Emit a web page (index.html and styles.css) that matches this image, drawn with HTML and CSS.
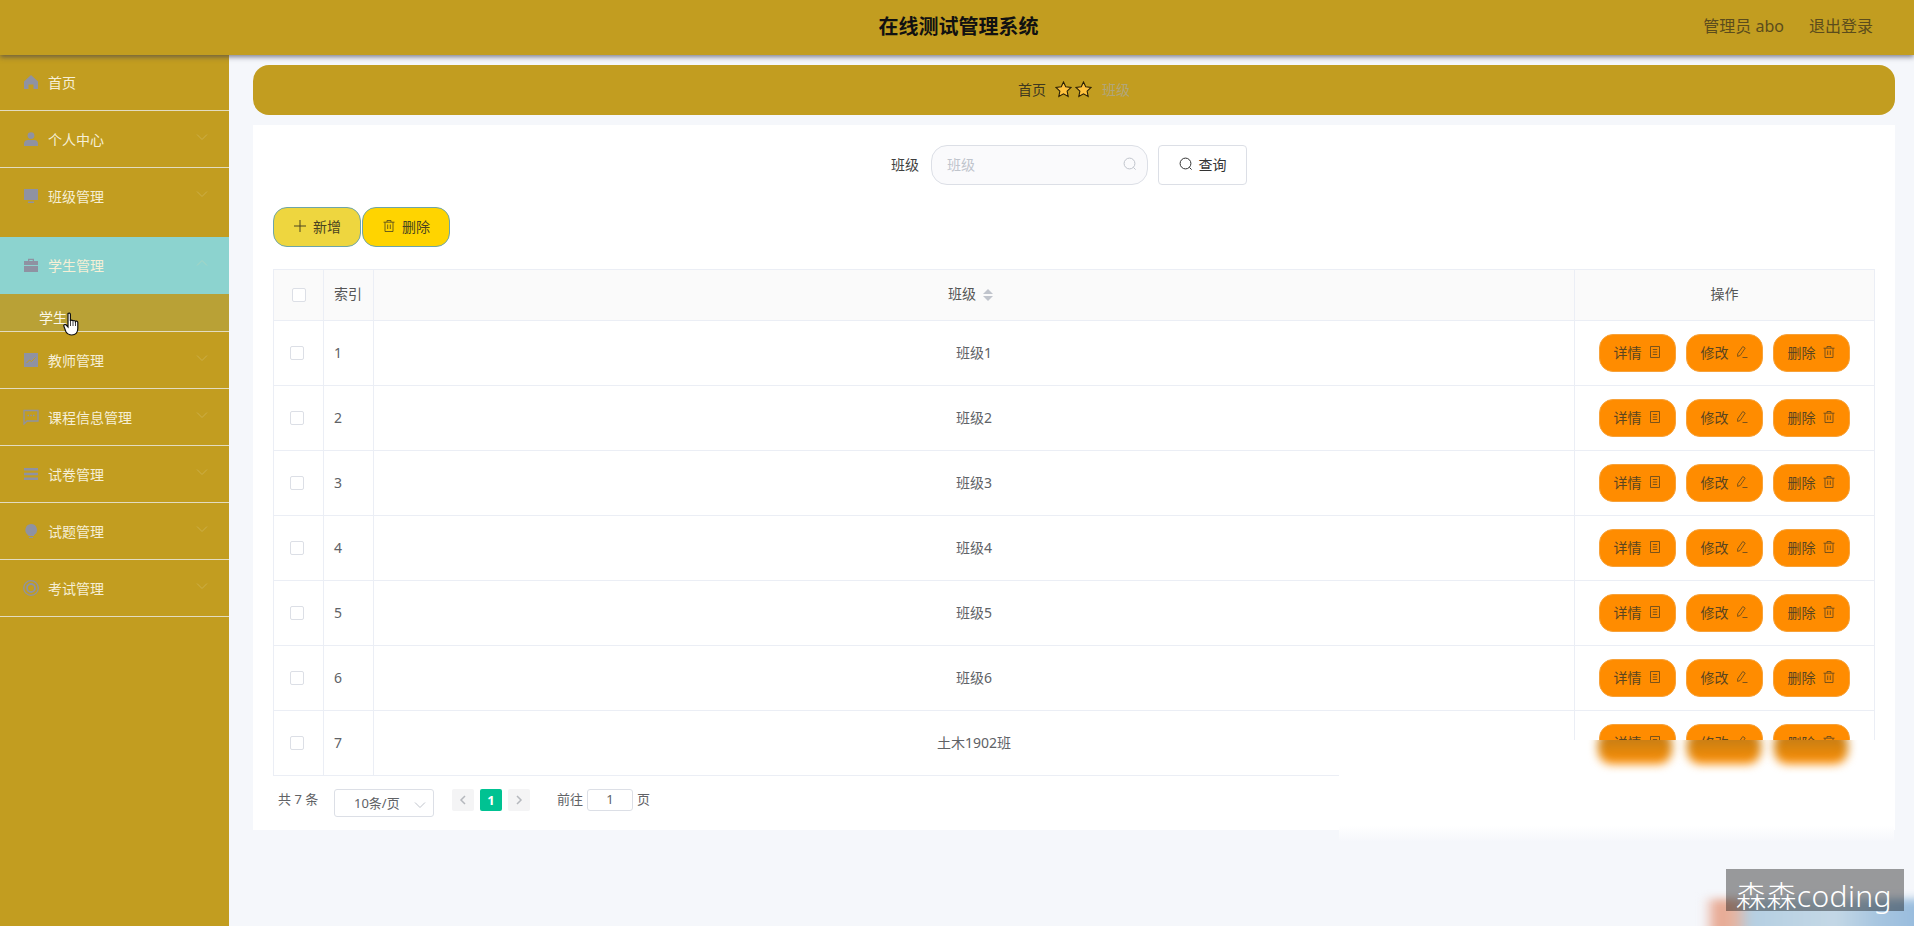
FILE: index.html
```html
<!DOCTYPE html>
<html lang="zh-CN">
<head>
    <meta charset="UTF-8">
    <title>在线测试管理系统</title>
    <link rel="stylesheet" href="styles.css">
</head>
<body>
    <svg class="defs" width="0" height="0">
        <symbol id="i-search" viewBox="0 0 14 14"><circle cx="6.5" cy="6.5" r="5.4" fill="none" stroke="currentColor"/><path d="M10.4 10.4l2.2 2.2" stroke="currentColor" fill="none"/></symbol>
        <symbol id="i-doc" viewBox="0 0 14 14"><path d="M2.5 1.5h9v11h-9zM4.8 4.500h4.400M4.8 7h4.400M4.8 9.500h4.400" fill="none" stroke="currentColor" stroke-width=".8"/></symbol>
        <symbol id="i-edit" viewBox="0 0 14 14"><path d="M7.8 1.500l2.400 1.600-5 7.400-2.600.9.100-2.600zM7.500 12.500h5" fill="none" stroke="currentColor" stroke-width=".8"/></symbol>
        <symbol id="i-trash" viewBox="0 0 14 14"><path d="M1.500 3.200h11M3 3.200v9.300h8V3.200M5 3V1.500h4V3M5.700 5.500v4.500M8.300 5.500v4.500" fill="none" stroke="currentColor" stroke-width=".8"/></symbol>
        <symbol id="i-down" viewBox="0 0 12 12"><path d="M1 3.500l5 5 5-5" fill="none" stroke="currentColor"/></symbol>
        <symbol id="i-star" viewBox="0 0 16 16"><path d="M8 .9l2.100 4.600 5 .6-3.700 3.400 1 5L8 12l-4.400 2.500 1-5L.9 6.100l5-.6z" fill="#ffc23e" stroke="#2a2006" stroke-width="1"/></symbol>
    </svg>

    <header class="topbar">
        <h1 class="title">在线测试管理系统</h1>
        <div class="user-links">
            <span>管理员 abo</span>
            <span>退出登录</span>
        </div>
    </header>

    <div class="layout">
        <aside class="sidebar">
            <div class="menu-item">
                <svg class="menu-icon" viewBox="0 0 14 14"><path d="M7 0L0 6.500V14h4.500V9.500h5V14H14V6.500z"/></svg>
                <span>首页</span>
            </div>
            <div class="menu-item">
                <svg class="menu-icon" viewBox="0 0 14 14"><circle cx="7" cy="3.600" r="3.400"/><path d="M0 14v-2.500C0 9 2 8 4 8h6c2 0 4 1 4 3.500V14z"/></svg>
                <span>个人中心</span>
                <svg class="chevron"><use href="#i-down"/></svg>
            </div>
            <div class="menu-item gap-after">
                <svg class="menu-icon" viewBox="0 0 14 14"><path d="M0 0h14v11H0zM4 12.500h6V14H4z"/></svg>
                <span>班级管理</span>
                <svg class="chevron"><use href="#i-down"/></svg>
            </div>
            <div class="menu-item active">
                <svg class="menu-icon" viewBox="0 0 14 14"><path d="M4 3V.8h6V3h4v4H0V3zM5.300 3h3.400V2H5.300zM0 8h14v6H0z"/></svg>
                <span>学生管理</span>
                <svg class="chevron up"><use href="#i-down"/></svg>
            </div>
            <div class="submenu-item">学生</div>
            <div class="menu-item">
                <svg class="menu-icon" viewBox="0 0 14 14"><path d="M0 0h14v14H0z"/><path d="M2.500 10l3-3 2 1.500 4-4" fill="none" stroke="#c29d20"/></svg>
                <span>教师管理</span>
                <svg class="chevron"><use href="#i-down"/></svg>
            </div>
            <div class="menu-item">
                <svg class="menu-icon wide" viewBox="0 0 16 16"><path d="M1 1.500h14v10.500H4l-3 3z" fill="none" stroke="currentColor" stroke-width="1.300"/><path d="M4.500 6.500h1.500M7.300 6.500h1.500M10 6.500h1.500" stroke="currentColor" stroke-width="1.300"/></svg>
                <span>课程信息管理</span>
                <svg class="chevron"><use href="#i-down"/></svg>
            </div>
            <div class="menu-item">
                <svg class="menu-icon" viewBox="0 0 14 14"><path d="M0 1h14v2.500H0zM0 5.800h14v2.500H0zM0 10.500h14V13H0z"/></svg>
                <span>试卷管理</span>
                <svg class="chevron"><use href="#i-down"/></svg>
            </div>
            <div class="menu-item">
                <svg class="menu-icon" viewBox="0 0 14 14"><path d="M7 0a6 6 0 0 1 3 11.200V12H4.400v-.8A6 6 0 0 1 7 0zM5 13h4v1H5z"/></svg>
                <span>试题管理</span>
                <svg class="chevron"><use href="#i-down"/></svg>
            </div>
            <div class="menu-item">
                <svg class="menu-icon wide" viewBox="0 0 16 16"><circle cx="8" cy="8" r="7.300" fill="none" stroke="currentColor" stroke-width="1.300"/><circle cx="8" cy="8" r="4" fill="none" stroke="currentColor" stroke-width="1.800"/></svg>
                <span>考试管理</span>
                <svg class="chevron"><use href="#i-down"/></svg>
            </div>
        </aside>

        <main class="main">
            <nav class="breadcrumb">
                <span>首页</span>
                <svg class="star"><use href="#i-star"/></svg>
                <svg class="star"><use href="#i-star"/></svg>
                <span class="crumb-current">班级</span>
            </nav>

            <section class="card">
                <form class="search-row" onsubmit="return false;">
                    <label class="search-label">班级</label>
                    <div class="search-input">
                        <span>班级</span>
                        <svg class="icon-14"><use href="#i-search"/></svg>
                    </div>
                    <button class="btn-query"><svg class="icon-14"><use href="#i-search"/></svg>查询</button>
                </form>

                <div class="toolbar">
                    <button class="btn-tool btn-add"><svg class="icon-14" viewBox="0 0 14 14"><path d="M7 1v12M1 7h12" stroke="currentColor" fill="none"/></svg>新增</button>
                    <button class="btn-tool btn-del"><svg class="icon-14"><use href="#i-trash"/></svg>删除</button>
                </div>

                <table class="data-table">
                    <colgroup>
                        <col class="col-check"><col class="col-index"><col><col class="col-actions">
                    </colgroup>
                    <thead>
                        <tr>
                            <th><i class="checkbox head-check"></i></th>
                            <th class="index">索引</th>
                            <th class="sortable">班级<span class="sort"><i class="caret-up"></i><i class="caret-down"></i></span></th>
                            <th>操作</th>
                        </tr>
                    </thead>
                    <tbody>
                        <tr><td><i class="checkbox"></i></td><td class="index">1</td><td>班级1</td><td><div class="actions"><button>详情<svg class="icon-14"><use href="#i-doc"/></svg></button><button>修改<svg class="icon-14"><use href="#i-edit"/></svg></button><button>删除<svg class="icon-14"><use href="#i-trash"/></svg></button></div></td></tr>
                        <tr><td><i class="checkbox"></i></td><td class="index">2</td><td>班级2</td><td><div class="actions"><button>详情<svg class="icon-14"><use href="#i-doc"/></svg></button><button>修改<svg class="icon-14"><use href="#i-edit"/></svg></button><button>删除<svg class="icon-14"><use href="#i-trash"/></svg></button></div></td></tr>
                        <tr><td><i class="checkbox"></i></td><td class="index">3</td><td>班级3</td><td><div class="actions"><button>详情<svg class="icon-14"><use href="#i-doc"/></svg></button><button>修改<svg class="icon-14"><use href="#i-edit"/></svg></button><button>删除<svg class="icon-14"><use href="#i-trash"/></svg></button></div></td></tr>
                        <tr><td><i class="checkbox"></i></td><td class="index">4</td><td>班级4</td><td><div class="actions"><button>详情<svg class="icon-14"><use href="#i-doc"/></svg></button><button>修改<svg class="icon-14"><use href="#i-edit"/></svg></button><button>删除<svg class="icon-14"><use href="#i-trash"/></svg></button></div></td></tr>
                        <tr><td><i class="checkbox"></i></td><td class="index">5</td><td>班级5</td><td><div class="actions"><button>详情<svg class="icon-14"><use href="#i-doc"/></svg></button><button>修改<svg class="icon-14"><use href="#i-edit"/></svg></button><button>删除<svg class="icon-14"><use href="#i-trash"/></svg></button></div></td></tr>
                        <tr><td><i class="checkbox"></i></td><td class="index">6</td><td>班级6</td><td><div class="actions"><button>详情<svg class="icon-14"><use href="#i-doc"/></svg></button><button>修改<svg class="icon-14"><use href="#i-edit"/></svg></button><button>删除<svg class="icon-14"><use href="#i-trash"/></svg></button></div></td></tr>
                        <tr><td><i class="checkbox"></i></td><td class="index">7</td><td>土木1902班</td><td><div class="actions"><button>详情<svg class="icon-14"><use href="#i-doc"/></svg></button><button>修改<svg class="icon-14"><use href="#i-edit"/></svg></button><button>删除<svg class="icon-14"><use href="#i-trash"/></svg></button></div></td></tr>
                    </tbody>
                </table>

                <div class="pagination">
                    <span class="total">共 7 条</span>
                    <div class="page-size">
                        <span>10条/页</span>
                        <svg class="size-arrow"><use href="#i-down"/></svg>
                    </div>
                    <span class="pager"><svg viewBox="0 0 12 12"><path d="M8 2L4 6l4 4" fill="none" stroke="currentColor" stroke-width="1.500"/></svg></span>
                    <span class="pager current">1</span>
                    <span class="pager"><svg viewBox="0 0 12 12"><path d="M4 2l4 4-4 4" fill="none" stroke="currentColor" stroke-width="1.500"/></svg></span>
                    <span class="jump">前往</span>
                    <span class="jump-input">1</span>
                    <span>页</span>
                </div>
            </section>
        </main>
    </div>

    <!-- things lying over the page in the recording -->
    <div class="smear-low"></div>
    <div class="smear-top">
        <i class="smear-btn smear-1"></i>
        <i class="smear-btn smear-2"></i>
        <i class="smear-btn smear-3"></i>
    </div>
    <div class="corner-blob"></div>
    <div class="watermark">森森coding</div>
    <svg class="hand" viewBox="0 0 18 25"><path d="M5 1.500c1-.9 2.300-.4 2.400 1V9c.3-1.200 2.400-1.200 2.500.3.300-1.100 2.300-1.100 2.500.4.500-.9 2.300-.7 2.400.8v6c0 3.500-2 6.500-6 6.500-3 0-4.500-1-6-3.500L1 14.500c-.9-1.600 1-2.700 2.200-1.500L5 15z" fill="#fff" stroke="#111" stroke-width="1.200"/><path d="M7.500 9v5M10 9.500V14M12.500 10v4" stroke="#111" stroke-width=".8"/></svg>
</body>
</html>
```

FILE: styles.css
```css
* {
    box-sizing: border-box;
}
html, body {
    margin: 0;
    height: 100%;
    overflow: hidden;
}
body {
    font-family: "Noto Sans", "Noto Sans CJK SC", sans-serif;
    font-size: 14px;
    color: #606266;
    background-color: #f5f7fb;
}
.defs {
    position: absolute;
}
button {
    font-family: inherit;
    cursor: pointer;
}
.icon-14 {
    width: 14px;
    height: 14px;
    flex: none;
}

/* top bar */
.topbar {
    position: relative;
    z-index: 2;
    height: 55px;
    background-color: #c29d20;
    box-shadow: 0 2px 5px rgba(60, 60, 80, 0.65);
}
.title {
    margin: 0;
    padding-left: 3px;
    text-align: center;
    font-size: 20px;
    line-height: 53px;
    color: #111;
    font-weight: 700;
}
.user-links {
    position: absolute;
    top: 0;
    right: 41px;
    display: flex;
    gap: 25px;
    font-size: 16px;
    line-height: 52px;
    color: #5b4c1c;
}

.layout {
    display: flex;
    height: 871px;
}

/* sidebar */
.sidebar {
    width: 229px;
    flex: none;
    background-color: #c29d20;
    color: #f6efd6;
}
.menu-item {
    display: flex;
    align-items: center;
    height: 57px;
    padding: 0 21px 0 24px;
    border-bottom: 1px solid #e3dcc0;
}
.menu-item:first-child {
    height: 56px;
    padding-bottom: 2px;
}
.menu-item.gap-after {
    border-bottom: none;
    margin-bottom: 12px;
    padding-bottom: 2px;
}
.menu-item.active {
    background-color: #8cd3cf;
    border-bottom: none;
    padding-bottom: 2px;
}
.menu-icon {
    width: 14px;
    height: 14px;
    margin-right: 10px;
    color: #8f92a2;
    fill: #8f92a2;
    flex: none;
}
.menu-icon.wide {
    width: 16px;
    height: 16px;
    margin: 0 9px 0 -1px;
}
.chevron {
    width: 12px;
    height: 12px;
    margin-left: auto;
    margin-top: -4px;
    color: #cdb04a;
}
.chevron.up {
    transform: rotate(180deg);
    color: #a8d6c4;
}
.submenu-item {
    height: 38px;
    padding: 13px 0 0 39px;
    line-height: 22px;
    background-color: #b9a136;
    border-bottom: 1px solid #e3dcc0;
    color: #fbf7e6;
}

/* main area */
.main {
    flex: 1;
    padding: 10px 19px 0 24px;
}
.breadcrumb {
    display: flex;
    justify-content: center;
    align-items: center;
    height: 50px;
    padding-bottom: 2px;
    margin-bottom: 10px;
    background-color: #c29d20;
    border-radius: 16px;
    color: #3d3720;
}
.star {
    width: 17px;
    height: 17px;
    margin-left: 3px;
}
.star:first-of-type {
    margin-left: 9px;
}
.crumb-current {
    margin-left: 10px;
    color: #b0a67c;
}
.card {
    height: 705px;
    padding: 20px;
    background-color: #fff;
}

/* search */
.search-row {
    display: flex;
    justify-content: center;
    align-items: center;
    gap: 10px;
    height: 40px;
    margin: 0 0 22px;
    padding-right: 10px;
}
.search-label {
    margin-right: 2px;
    padding-bottom: 2px;
    color: #3f3f3f;
}
.search-input {
    display: flex;
    align-items: center;
    justify-content: space-between;
    width: 217px;
    height: 40px;
    padding: 0 10px 2px 15px;
    background-color: #fafafc;
    border: 1px solid #dcdfe6;
    border-radius: 16px;
    color: #c0c4cc;
}
.btn-query {
    display: flex;
    align-items: center;
    justify-content: center;
    gap: 6px;
    width: 89px;
    height: 40px;
    padding: 0 0 2px;
    background-color: #fff;
    border: 1px solid #dcdfe6;
    border-radius: 4px;
    font-size: 14px;
    color: #333;
}

/* toolbar */
.toolbar {
    display: flex;
    gap: 1px;
    margin-bottom: 22px;
}
.btn-tool {
    display: flex;
    align-items: center;
    justify-content: center;
    gap: 6px;
    width: 88px;
    height: 40px;
    padding: 0 0 2px;
    border: 1px solid #6ea5a8;
    border-radius: 14px;
    font-size: 14px;
    color: #4a4420;
}
.btn-add {
    background-color: #eed63f;
}
.btn-del {
    background-color: #ffd400;
}

/* table */
.data-table {
    width: 100%;
    table-layout: fixed;
    border-collapse: collapse;
    border: 1px solid #ebeef5;
}
.col-check {
    width: 50px;
}
.col-index {
    width: 50px;
}
.col-actions {
    width: 300px;
}
.data-table th,
.data-table td {
    border: 1px solid #ebeef5;
    padding: 0;
    text-align: center;
    font-weight: 400;
    color: #606266;
}
.data-table th {
    height: 51px;
    background-color: #fafafa;
    color: #555;
}
.data-table th + th {
    padding-bottom: 4px;
}
.data-table th.sortable {
    padding-right: 7px;
}
.data-table td {
    height: 65px;
    padding-bottom: 2px;
}
.data-table td:first-child,
.data-table td:last-child {
    padding-bottom: 0;
}
.data-table .index {
    text-align: left;
    padding-left: 10px;
}
.checkbox {
    display: block;
    width: 14px;
    height: 14px;
    margin-left: 16px;
    background-color: #fff;
    border: 1px solid #dcdfe6;
    border-radius: 2px;
}
.checkbox.head-check {
    margin-left: 18px;
}
.sort {
    display: inline-flex;
    flex-direction: column;
    gap: 2px;
    margin-left: 7px;
    vertical-align: middle;
}
.caret-up,
.caret-down {
    width: 0;
    height: 0;
    border-left: 5px solid transparent;
    border-right: 5px solid transparent;
}
.caret-up {
    border-bottom: 5px solid #c0c4cc;
}
.caret-down {
    border-top: 5px solid #c0c4cc;
}
.actions {
    display: flex;
    justify-content: center;
    gap: 10px;
}
.actions button {
    display: flex;
    align-items: center;
    justify-content: center;
    gap: 6px;
    width: 77px;
    height: 38px;
    padding: 0 0 2px;
    background-color: #ff8c00;
    border: 1px solid #f7a23a;
    border-radius: 14px;
    font-size: 14px;
    color: #5a4520;
}

/* pagination */
.pagination {
    display: flex;
    align-items: flex-start;
    height: 28px;
    margin-top: 13px;
    padding-left: 5px;
    font-size: 13px;
    line-height: 20px;
    color: #606266;
}
.total {
    width: 56px;
}
.page-size {
    position: relative;
    width: 100px;
    height: 28px;
    margin-right: 18px;
    padding-left: 19px;
    line-height: 26px;
    border: 1px solid #dcdfe6;
    border-radius: 3px;
}
.size-arrow {
    position: absolute;
    top: 9px;
    right: 7px;
    width: 12px;
    height: 12px;
    color: #c0c4cc;
}
.pager {
    display: flex;
    align-items: center;
    justify-content: center;
    width: 22px;
    height: 22px;
    margin-right: 6px;
    background-color: #f4f4f5;
    border-radius: 2px;
    color: #b5b8bd;
}
.pager svg {
    width: 12px;
    height: 12px;
}
.pager.current {
    background-color: #00c292;
    color: #fff;
    font-weight: 700;
}
.jump {
    margin-left: 21px;
    margin-right: 4px;
}
.jump-input {
    width: 46px;
    height: 22px;
    margin-right: 4px;
    text-align: center;
    line-height: 18px;
    border: 1px solid #dcdfe6;
    border-radius: 3px;
}

/* overlays from the recording */
.smear-top {
    position: absolute;
    left: 1574px;
    top: 740px;
    width: 320px;
    height: 40px;
    overflow: hidden;
    background-color: #fff;
}
.smear-btn {
    position: absolute;
    top: -10px;
    width: 74px;
    height: 34px;
    border-radius: 14px;
    background: linear-gradient(#b8761a, #dc860e 55%, #ff8c00);
    filter: blur(5px);
}
.smear-1 {
    left: 24px;
}
.smear-2 {
    left: 113px;
}
.smear-3 {
    left: 200px;
}
.smear-low {
    position: absolute;
    left: 1339px;
    top: 767px;
    width: 555px;
    height: 75px;
    background: linear-gradient(#fff 78%, #f5f7fb);
}
.corner-blob {
    position: absolute;
    left: 1703px;
    top: 899px;
    width: 240px;
    height: 40px;
    background: linear-gradient(90deg, #f5f7fb, #e8a892 6%, #e6b4a0 13%, #b5cfe2 20%, #c4d8e6 55%, #a8c6e0 72%, #8fb6dc);
    filter: blur(4px);
}
.watermark {
    position: absolute;
    left: 1726px;
    top: 869px;
    width: 178px;
    height: 42px;
    padding-left: 10px;
    background-color: rgba(0, 0, 0, 0.38);
    font-size: 30px;
    font-weight: 300;
    letter-spacing: 0.4px;
    line-height: 53px;
    color: #fff;
    white-space: nowrap;
}
.hand {
    position: absolute;
    left: 63px;
    top: 312px;
    width: 18px;
    height: 25px;
}
```
